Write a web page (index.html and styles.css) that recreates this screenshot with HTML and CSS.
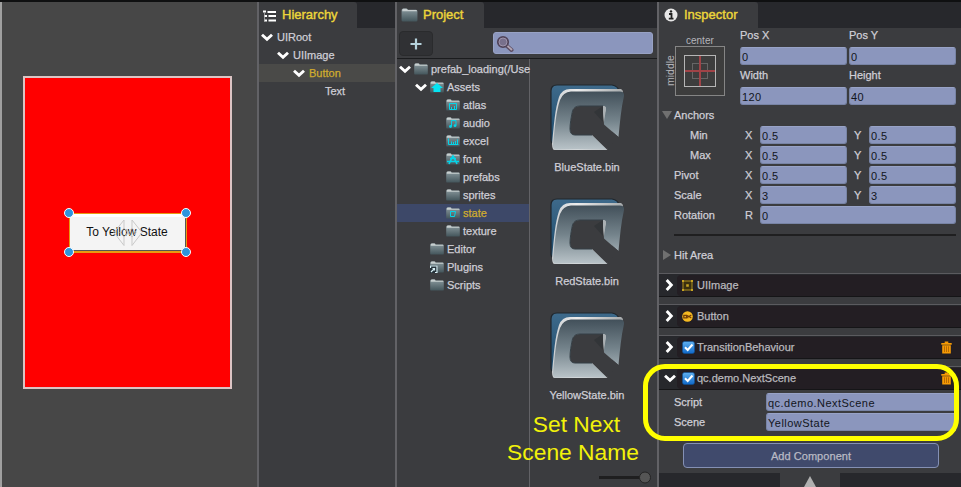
FILE: index.html
```html
<!DOCTYPE html>
<html lang="en">
<head>
<meta charset="utf-8">
<title>Editor</title>
<link rel="stylesheet" href="styles.css">
</head>
<body>
<svg class="defs" width="0" height="0">
  <defs>
    <linearGradient id="gFold" x1="0" y1="0" x2="0" y2="1"><stop offset="0" stop-color="#8b9a9f"/><stop offset="1" stop-color="#43555b"/></linearGradient>
    <linearGradient id="gQ" x1="0" y1="0" x2="0" y2="1"><stop offset="0" stop-color="#42505a"/><stop offset=".5" stop-color="#74838b"/><stop offset="1" stop-color="#b9c3c8"/></linearGradient>
    <linearGradient id="gBack" x1="0" y1="0" x2="0" y2="1"><stop offset="0" stop-color="#3e6a8b"/><stop offset="1" stop-color="#1d4a6b"/></linearGradient>
    <linearGradient id="gEdge" x1="0" y1="0" x2="1" y2="0"><stop offset="0" stop-color="#c9cdd0"/><stop offset=".35" stop-color="#ececec"/><stop offset="1" stop-color="#a7abad"/></linearGradient>
    <linearGradient id="gCheck" x1="0" y1="0" x2="0" y2="1"><stop offset="0" stop-color="#5fb0ef"/><stop offset="1" stop-color="#1068c8"/></linearGradient>
    <symbol id="down" viewBox="0 0 12 9"><path d="M1 1.7 6 6.3 11 1.7" fill="none" stroke="#fff" stroke-width="2.9"/></symbol>
    <symbol id="right" viewBox="0 0 9 12"><path d="M1.7 1 6.3 6 1.7 11" fill="none" stroke="#fff" stroke-width="2.9"/></symbol>
    <symbol id="folder" viewBox="0 0 14 12">
      <path d="M.2 2Q.2.7 1.4.4H4.5Q5.4.5 5.8 1.5H12.600Q13.8 1.5 13.8 2.8V10.400Q13.8 11.600 12.600 11.600H1.400Q.2 11.600.2 10.400Z" fill="url(#gFold)"/>
      <path d="M.8 1.400Q1.2.6 2 .6H4.300Q5.100.7 5.400 1.700H12.800Q13.400 1.900 13.400 2.800H.8Z" fill="#c8cfd0"/>
    </symbol>
    <symbol id="q" viewBox="0 0 74 67">
      <path d="M7 1H62Q68 2 69 7L60 60H5Q1 60 1 56V7Q1 1 7 1Z" fill="url(#gBack)" stroke="#20272d" stroke-width="1.2"/>
      <path d="M3 65Q2 63 2 60C4 40 5 25 9 13Q12 5 20 5H71Q73 6 73 8L57 66H5Q3 66 3 65Z" fill="url(#gEdge)"/>
      <path fill-rule="evenodd" d="M5 65.500Q3 65 3 62C5 42 6 28 10 16Q13 8 21 7.500H70Q74.500 7.500 74 12C71 25 70 38 68.500 53L53.500 40.500Q54 31 56 25 56 22 53 22H30Q24 22 22.500 27C21 34 20 40 20 45Q20 51 25 51H42L57 65.500Z" fill="url(#gQ)"/>
      <path d="M30 22H53L54 40.500 68.500 53 57 65.500 42 51H25Q20 51 20 45C20 40 21 34 22.500 27Q24 22 30 22Z" fill="#3b3c3f"/>
      <path d="M53 22Q56 22 56 25L54 38 53 28Z" fill="#aab0b3"/>
      <path d="M44 28 53 22V38Z" fill="#323538"/>
      <path d="M30 22H53M20 45C20 40 21 34 22.500 27Q24 22 30 22M20 45Q20 51 25 51H42" fill="none" stroke="#343f46" stroke-width="1"/>
    </symbol>
    <symbol id="check" viewBox="0 0 13 13"><rect x=".5" y=".5" width="12" height="12" rx="2" fill="url(#gCheck)" stroke="#0d4f96" stroke-width=".6"/><path d="M3 6.200 5.700 9 10.500 3.500" fill="none" stroke="#fff" stroke-width="2"/></symbol>
    <symbol id="trash" viewBox="0 0 11 13"><path d="M.3 2H3.700V.6H7.300V2H10.700V3.700H.3ZM1.200 4.300H9.800V12.500H1.200Z" fill="#f59a05"/><path d="M3.500 5.300V11M5.500 5.300V11M7.500 5.300V11" stroke="#a96000" stroke-width=".8"/></symbol>
  </defs>
</svg>
<div class="app">
  <section class="scene">
    <div class="phone">
      <div class="btn">To Yellow State
        <svg class="move" width="30" height="28" viewBox="0 0 30 28" fill="none" stroke="#c9c9c9" stroke-width="1"><path d="M11 1 1 13.500 11 26.500V18L7 13.500 11 9ZM19 1 29 13.500 19 26.500V18L23 13.500 19 9Z"/><path d="M11 9 19 18M19 9 11 18"/></svg>
        <i class="h tl"></i><i class="h tr"></i><i class="h bl"></i><i class="h br"></i>
      </div>
    </div>
  </section>

  <section class="panel hierarchy">
    <header><h2 class="tab"><svg class="list" width="13" height="12" viewBox="0 0 13 12"><path d="M4.500 2H13M5.500 6H13M5.500 10.500H13" stroke="#fff" stroke-width="2"/><path d="M0 1.500H3M1 6H4M1 10.500H4" stroke="#fff" stroke-width="2"/><path d="M1.500 2V11" stroke="#aaa" stroke-width=".8"/></svg>Hierarchy</h2></header>
    <div class="node n0"><svg class="dn"><use href="#down"/></svg>UIRoot</div>
    <div class="node n1"><svg class="dn"><use href="#down"/></svg>UIImage</div>
    <div class="node n2 picked"><svg class="dn"><use href="#down"/></svg>Button</div>
    <div class="node n3">Text</div>
  </section>

  <section class="panel project">
    <header><h2 class="tab"><svg class="bigfold"><use href="#folder"/></svg>Project</h2></header>
    <div class="tools">
      <button class="plus"><svg width="12" height="12" viewBox="0 0 12 12"><path d="M6 .5V11.500M.5 6H11.500" stroke="#b5d2dc" stroke-width="2.200"/></svg></button>
      <div class="search"><svg width="18" height="18" viewBox="0 0 18 18"><path d="M10.500 10.500 15.500 15" stroke="#5c4d62" stroke-width="4" stroke-linecap="round"/><path d="M11 10.500 15.500 14.500" stroke="#b3a6b5" stroke-width="1.800" stroke-linecap="round"/><circle cx="7" cy="7" r="5" fill="#78708c" stroke="#51445a" stroke-width="2.200"/><circle cx="7" cy="7" r="4" fill="none" stroke="#9d93ab" stroke-width="1"/></svg></div>
    </div>
    <div class="split">
      <div class="tree">
        <div class="node p0"><svg class="dn"><use href="#down"/></svg><svg class="fold"><use href="#folder"/></svg>prefab_loading(/Use</div>
        <div class="node p1"><svg class="dn"><use href="#down"/></svg><svg class="fold" viewBox="0 0 14 12"><use href="#folder"/><path d="M7 2 13 7H10.500V11H3.500V7H1Z" fill="#05e4f2"/></svg>Assets</div>
        <div class="node p2"><svg class="fold" viewBox="0 0 14 12"><use href="#folder"/><path d="M3.500 4.500H10.500V10.500H3.500ZM5.500 10V8M8.500 10V7" fill="none" stroke="#05d4e8"/></svg>atlas</div>
        <div class="node p2"><svg class="fold" viewBox="0 0 14 12"><use href="#folder"/><path d="M5.500 9.500V3.500H10V8.500" fill="none" stroke="#05d4e8"/><circle cx="4.500" cy="9.500" r="1.400" fill="#05d4e8"/><circle cx="9" cy="8.700" r="1.400" fill="#05d4e8"/></svg>audio</div>
        <div class="node p2"><svg class="fold" viewBox="0 0 14 12"><use href="#folder"/><path d="M2.500 3.500V9.500H12.500M5.500 9V6.500M7.500 9V7M9.500 9V6M11.500 9V4.500" fill="none" stroke="#05d4e8"/></svg>excel</div>
        <div class="node p2"><svg class="fold" viewBox="0 0 14 12"><use href="#folder"/><path d="M7 2.500 3 11M7 2.500 11 11M1 8.500H13M4 5.500H10" fill="none" stroke="#05d4e8" stroke-width="1.700"/></svg>font</div>
        <div class="node p2"><svg class="fold"><use href="#folder"/></svg>prefabs</div>
        <div class="node p2"><svg class="fold"><use href="#folder"/></svg>sprites</div>
        <div class="node p2 chosen"><svg class="fold" viewBox="0 0 14 12"><use href="#folder"/><path d="M4.500 4.500H9.500L8.500 9.500H4.500Z" fill="none" stroke="#05d4e8"/></svg>state</div>
        <div class="node p2"><svg class="fold"><use href="#folder"/></svg>texture</div>
        <div class="node p3"><svg class="fold"><use href="#folder"/></svg>Editor</div>
        <div class="node p3"><svg class="fold" viewBox="0 0 14 12"><use href="#folder"/><path d="M0 4.500H7.500V12H0Z" fill="#26323a"/><path d="M.5 7V5H7V11.500H5M1 11 4.500 7.500M2.500 7.500H4.500V9.500" fill="none" stroke="#d6eef4" stroke-width="1.200"/></svg>Plugins</div>
        <div class="node p3"><svg class="fold"><use href="#folder"/></svg>Scripts</div>
      </div>
      <div class="files">
        <figure><svg><use href="#q"/></svg><figcaption>BlueState.bin</figcaption></figure>
        <figure><svg><use href="#q"/></svg><figcaption>RedState.bin</figcaption></figure>
        <figure><svg><use href="#q"/></svg><figcaption>YellowState.bin</figcaption></figure>
        <div class="slider"><i></i></div>
      </div>
    </div>
  </section>

  <section class="panel inspector">
    <header><h2 class="tab"><svg width="14" height="14" viewBox="0 0 14 14"><circle cx="7" cy="7" r="6.500" fill="#e8e8e8"/><path d="M5 6H7.500V10.500M4.800 10.700H9.500" fill="none" stroke="#222" stroke-width="1.800"/><circle cx="7" cy="3.400" r="1.200" fill="#222"/></svg>Inspector</h2></header>
    <div class="transform">
      <div class="anchor"><span class="ctr">center</span><span class="mid">middle</span>
        <svg width="50" height="50" viewBox="0 0 50 50" fill="none"><rect x=".5" y=".5" width="49" height="49" stroke="#858585" fill="#3d3d3d"/><rect x="17.500" y="17.500" width="15" height="15" stroke="#666"/><path d="M25 9V41M9 25H41" stroke="#a04347" stroke-width="2"/><rect x="9.500" y="9.500" width="31" height="31" stroke="#b5b5b5"/></svg>
      </div>
      <div class="pos"><label>Pos X</label><label>Pos Y</label><b>0</b><b>0</b><label>Width</label><label>Height</label><b>120</b><b>40</b></div>
    </div>
    <div class="fold-title"><svg width="10" height="8"><path d="M0 0H10L5 8Z" fill="#707070"/></svg>Anchors</div>
    <div class="row in"><span>Min</span><em>X</em><b>0.5</b><em>Y</em><b>0.5</b></div>
    <div class="row in"><span>Max</span><em>X</em><b>0.5</b><em>Y</em><b>0.5</b></div>
    <div class="row"><span>Pivot</span><em>X</em><b>0.5</b><em>Y</em><b>0.5</b></div>
    <div class="row"><span>Scale</span><em>X</em><b>3</b><em>Y</em><b>3</b></div>
    <div class="row wide"><span>Rotation</span><em>R</em><b>0</b></div>
    <hr>
    <div class="fold-title hit"><svg width="8" height="10"><path d="M0 0V10L8 5Z" fill="#707070"/></svg>Hit Area</div>
    <div class="comp"><svg class="rt"><use href="#right"/></svg><div><svg width="11" height="11" viewBox="0 0 11 11"><rect x="1" y="1" width="9" height="9" fill="#3a300f" stroke="#9a7f1d" stroke-width="1.200"/><path d="M0 0H2V2H0ZM9 0H11V2H9ZM0 9H2V11H0ZM9 9H11V11H9ZM4.200 4.200H6.800V6.800H4.200Z" fill="#c7a423"/></svg>UIImage</div></div>
    <div class="comp"><svg class="rt"><use href="#right"/></svg><div><svg width="11" height="11" viewBox="0 0 11 11"><circle cx="5.500" cy="5.500" r="5.300" fill="#f5b921"/><path d="M1.800 4.300H4.500V6.800H1.800ZM5.800 4V7.200M5.800 5.500H7M9.300 4 7 5.500 9.300 7" fill="none" stroke="#743e08" stroke-width="1.200"/></svg>Button</div></div>
    <div class="comp"><svg class="rt"><use href="#right"/></svg><div><svg class="ck"><use href="#check"/></svg>TransitionBehaviour<svg class="tr-ic"><use href="#trash"/></svg></div></div>
    <div class="comp last"><svg class="dn"><use href="#down"/></svg><div><svg class="ck"><use href="#check"/></svg>qc.demo.NextScene<svg class="tr-ic"><use href="#trash"/></svg></div></div>
    <div class="prop"><span>Script</span><b>qc.demo.NextScene</b></div>
    <div class="prop"><span>Scene</span><b>YellowState</b></div>
    <button class="add">Add Component</button>
    <footer><div><svg width="12" height="11"><path d="M6 0 12 11H0Z" fill="#b0b0b0"/></svg></div></footer>
  </section>

  <div class="ring"></div>
  <p class="note"><span>Set Next</span><br>Scene Name</p>
</div>
</body>
</html>
```
FILE: styles.css
```css
* { box-sizing: border-box; }
body { margin: 0; background: #0f1011; font: 11px/18px "Liberation Sans", Arial, sans-serif; color: #cfced6; }
.defs { position: absolute; }
.app { position: relative; width: 961px; height: 487px; padding-top: 2px; display: flex; overflow: hidden; }
svg { flex: none; display: block; }
b, em, i { font-weight: normal; font-style: normal; }
button { font: inherit; padding: 0; }

.scene { width: 257px; border-left: 2px solid #a0a0a0; background: #474747; padding: 74px 0 0 21px; }
.phone { width: 209px; height: 313px; background: #f00; border: 2px solid #dcc4c4; padding: 135px 0 0 44px; }
.btn { position: relative; width: 118px; height: 40px; border: 1px solid #e89a10; border-bottom-width: 2px; background: #f4f4f4; border-radius: 3px; box-shadow: inset 0 3px #fff, inset -1px -1px #555; text-align: center; font-size: 12px; line-height: 37px; color: #111; text-indent: -2px; }
.move { position: absolute; left: 43px; top: 5px; }
.h { position: absolute; width: 10px; height: 10px; border-radius: 50%; background: #2d94dc; border: 1px solid #fff; }
.tl { left: -6px; top: -6px; } .tr { right: -5px; top: -6px; } .bl { left: -6px; bottom: -6px; } .br { right: -5px; bottom: -6px; }

.panel { background: #3b3c3f; border-left: 2px solid #626266; -webkit-text-stroke: .25px; }
.hierarchy { width: 138px; }
.project { width: 262px; display: flex; flex-direction: column; }
.inspector { width: 304px; overflow: hidden; }
header { height: 26px; background: #27282c; display: flex; flex: none; }
.tab { margin: 0; display: flex; align-items: center; gap: 6px; height: 26px; padding-left: 4px; background: #3b3c3f; border-radius: 0 3px 0 0; font-size: 13px; font-weight: normal; color: #edd63a; -webkit-text-stroke: .4px; }
.hierarchy .tab { width: 98px; } .project .tab { width: 87px; } .inspector .tab { width: 99px; padding-left: 5px; }
.list { margin-top: 2px; }
.bigfold { width: 17px; height: 14px; }
.project .tab { padding-left: 4px; gap: 5px; }

.node { display: flex; align-items: center; height: 18px; white-space: nowrap; }
.dn { width: 12px; height: 9px; }
.rt { width: 9px; height: 12px; }
.n0, .n1, .n2 { gap: 4px; }
.n0 { padding-left: 2px; } .n1 { padding-left: 18px; } .n2 { padding-left: 34px; } .n3 { padding-left: 66px; }
.picked { background: #4a4a48; color: #d0ac2e; }

.tools { height: 31px; flex: none; display: flex; justify-content: space-between; padding: 3px 4px 0 2px; border-bottom: 1px solid #1b1c1e; }
.plus { width: 34px; height: 25px; border: 1px solid #2a2b2d; border-radius: 4px; background: #303134; display: flex; align-items: center; justify-content: center; }
.search { width: 160px; height: 22px; margin-top: 1px; border-radius: 3px; background: #8b96bd; border: 1px solid #98a2c4; padding: 2px; }
.split { flex: 1; display: flex; min-height: 0; }
.tree { width: 133px; padding-top: 1px; border-right: 1px solid #626266; }
.fold { width: 14px; height: 12px; }
.tree .node { gap: 3px; }
.p0 { padding-left: 2px; } .p1 { padding-left: 18px; } .p2 { padding-left: 49px; } .p3 { padding-left: 33px; }
.chosen { background: #3d4868; color: #d0ac2e; }
.files { flex: 1; padding: 25px 3px 0 0; }
figure { margin: 0; height: 114px; }
figure svg { width: 74px; height: 67px; margin: 0 auto 7px 20px; }
figcaption { width: 114px; text-align: center; }
.slider { width: 46px; height: 3px; margin: 50px 0 0 69px; background: #1f1f20; }
.slider i { display: block; width: 12px; height: 12px; border-radius: 50%; background: #555; border: 1px solid #242424; margin-left: 40px; transform: translateY(-4.500px); }

.inspector b { display: block; height: 18px; line-height: 18px; padding-left: 1px; background: #8b96bd; border: 1px solid #7884a5; border-top-color: #98a3c7; border-radius: 3px; color: #12151c; letter-spacing: .4px; -webkit-text-stroke: 0; font-size: 11px; }
.transform { display: flex; height: 78px; }
.anchor { position: relative; width: 81px; padding: 18px 0 0 16px; color: #b5b5ba; -webkit-text-stroke: 0; }
.ctr { position: absolute; left: 27px; top: 4px; font-size: 10px; }
.mid { position: absolute; left: 2px; top: 25px; height: 36px; writing-mode: vertical-rl; transform: rotate(180deg); font-size: 10.500px; text-align: center; }
.pos { display: grid; grid-template-columns: 107px 107px; column-gap: 2px; grid-template-rows: 19px 21px 19px 19px; }
.pos label { line-height: 14px; }
.fold-title { height: 20px; display: flex; align-items: center; gap: 2px; padding-left: 3px; }
.fold-title:not(.hit) { height: 18px; margin-bottom: 1px; }
.hit { gap: 3px; padding-left: 4px; height: 22px; }
.row { display: grid; grid-template-columns: 70px 16px 87px 22px 87px; align-items: center; height: 20px; padding-left: 15px; }
.row.wide { grid-template-columns: 70px 16px 196px; }
.row.in span { padding-left: 16px; }
.row em { padding-left: 1px; }
.row em:nth-of-type(2) { padding-left: 7px; }
hr { height: 2px; border: 0; background: #1f1f20; margin: 9px 5px 8px 15px; }
.comp { height: 24px; margin-bottom: 7px; border-top: 1px solid #5b5b5f; border-bottom: 1px solid #151517; background: #27282c; display: flex; align-items: center; padding-left: 6px; gap: 3px; }
.hit + .comp { margin-top: 7px; }
.comp > svg.dn { margin-left: -1px; margin-right: -2px; }
.comp > div { flex: 1; height: 21px; background: #231e23; border-radius: 4px 0 0 4px; display: flex; align-items: center; gap: 4px; padding-left: 5px; color: #b9b8bd; }
.comp .ck { width: 13px; height: 13px; margin-right: -2px; }
.comp .tr-ic { width: 11px; height: 13px; margin: 0 9px 0 auto; }
.last { margin-bottom: 2px; }
.prop { height: 20px; display: grid; grid-template-columns: 92px 190px; align-items: center; padding-left: 15px; }
.inspector .prop b { letter-spacing: .47px; border-radius: 3px 0 0 3px; }
.add { display: block; width: 256px; height: 25px; margin: 11px 0 5px 24px; background: #404a6c; border: 1px solid #8490b4; border-radius: 4px; color: #b9bac4; letter-spacing: .05px; }
footer { height: 14px; background: #27282c; display: flex; justify-content: center; }
footer div { width: 60px; background: #3b3c3f; display: flex; justify-content: center; padding-top: 3px; }

.ring { position: absolute; left: 643px; top: 364px; width: 316px; height: 77px; border: 5px solid #ff0; border-radius: 22px; }
.note { position: absolute; left: 498px; top: 410px; width: 150px; margin: 0; text-align: center; font-size: 22.800px; line-height: 28px; color: #f2f20a; }
.note span { padding-left: 7px; }
```
